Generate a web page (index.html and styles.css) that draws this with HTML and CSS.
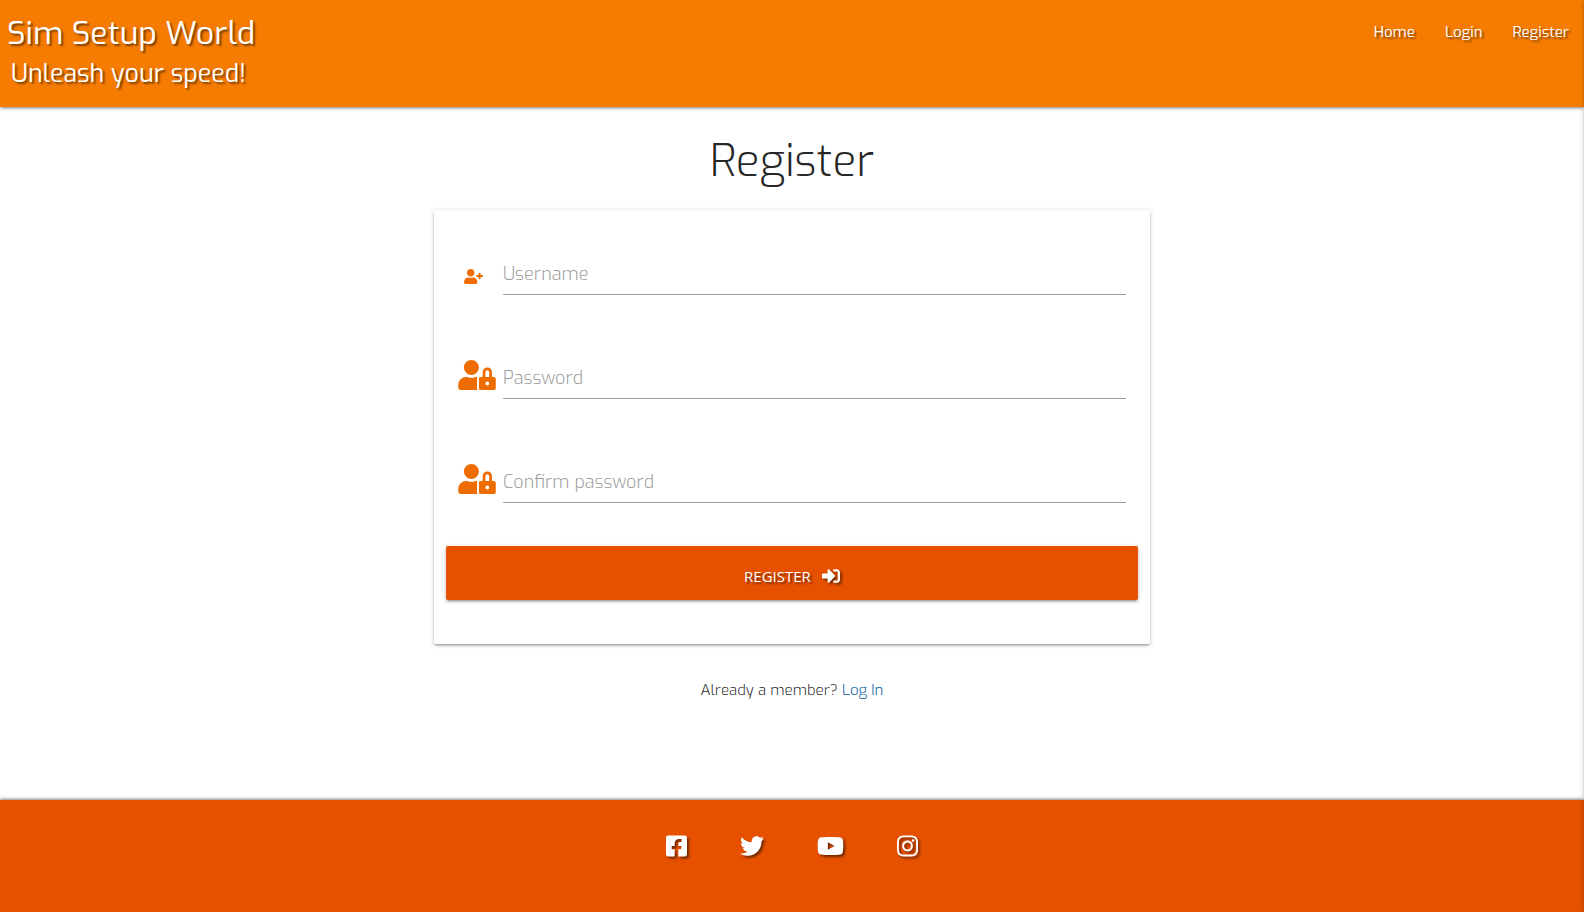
FILE: index.html
```html
<!DOCTYPE html>
<html lang="en">
<head>
<meta charset="utf-8">
<meta name="viewport" content="width=device-width, initial-scale=1">
<title>Sim Setup World</title>
<link rel="stylesheet" href="styles.css">
</head>
<body>
<svg class="sprite" aria-hidden="true">
  <symbol id="user-lock" viewBox="0 0 640 512"><path d="M224 256A128 128 0 1 0 96 128a128 128 0 0 0 128 128zm96 64a63.08 63.08 0 0 1 8.1-30.5c-4.800-.5-9.500-1.500-14.500-1.500h-16.700a174.080 174.080 0 0 1-145.800 0h-16.700A134.430 134.430 0 0 0 0 422.400V464a48 48 0 0 0 48 48h280.900a63.540 63.540 0 0 1-8.900-32zm288-32h-32v-80a80 80 0 0 0-160 0v80h-32a32 32 0 0 0-32 32v160a32 32 0 0 0 32 32h224a32 32 0 0 0 32-32V320a32 32 0 0 0-32-32zM496 432a32 32 0 1 1 32-32 32 32 0 0 1-32 32zm32-144h-64v-80a32 32 0 0 1 64 0z"/></symbol>
</svg>
<header class="header">
  <div class="brand">
    <a class="logo" href="#">Sim Setup World</a>
    <p class="tagline">Unleash your speed!</p>
  </div>
  <nav class="nav" aria-label="Main">
    <a href="#">Home</a>
    <a href="#">Login</a>
    <a href="#">Register</a>
  </nav>
</header>
<main class="main">
  <h1 class="title">Register</h1>
  <form class="card">
    <div class="row">
      <span class="icon-box"><svg class="icon-small" viewBox="0 0 640 512" aria-hidden="true"><path d="M624 208h-64v-64c0-8.800-7.200-16-16-16h-32c-8.800 0-16 7.200-16 16v64h-64c-8.800 0-16 7.200-16 16v32c0 8.800 7.200 16 16 16h64v64c0 8.800 7.200 16 16 16h32c8.800 0 16-7.200 16-16v-64h64c8.800 0 16-7.200 16-16v-32c0-8.800-7.200-16-16-16zm-400 48c70.700 0 128-57.300 128-128S294.700 0 224 0 96 57.300 96 128s57.300 128 128 128zm89.600 32h-16.700c-22.200 10.200-46.900 16-72.900 16s-50.600-5.800-72.900-16h-16.700C60.200 288 0 348.200 0 422.400V464c0 26.500 21.500 48 48 48h352c26.500 0 48-21.500 48-48v-41.600c0-74.200-60.200-134.400-134.400-134.400z"/></svg></span>
      <label class="label" for="username">Username</label>
      <input class="input" id="username" type="text" autocomplete="username">
    </div>
    <div class="row">
      <span class="icon-box"><svg class="icon-large" aria-hidden="true"><use href="#user-lock"/></svg></span>
      <label class="label" for="password">Password</label>
      <input class="input" id="password" type="password">
    </div>
    <div class="row">
      <span class="icon-box"><svg class="icon-large" aria-hidden="true"><use href="#user-lock"/></svg></span>
      <label class="label" for="confirm">Confirm password</label>
      <input class="input" id="confirm" type="password">
    </div>
    <button class="button" type="submit">Register
      <svg class="button-icon" viewBox="0 0 512 512" aria-hidden="true"><path d="M416 448h-84c-6.600 0-12-5.400-12-12v-40c0-6.600 5.400-12 12-12h84c17.700 0 32-14.300 32-32V160c0-17.700-14.300-32-32-32h-84c-6.600 0-12-5.400-12-12V76c0-6.600 5.400-12 12-12h84c53 0 96 43 96 96v192c0 53-43 96-96 96zm-47-209L201 71c-15-15-41-4.500-41 17v96H24c-13.300 0-24 10.700-24 24v96c0 13.300 10.700 24 24 24h136v96c0 21.500 26 32 41 17l168-168c9.300-9.400 9.300-24.600 0-34z"/></svg>
    </button>
  </form>
  <p class="member">Already a member? <a href="#">Log In</a></p>
</main>
<footer class="footer">
  <a href="#" aria-label="Facebook"><svg class="social" viewBox="0 0 448 512"><path d="M400 32H48A48 48 0 0 0 0 80v352a48 48 0 0 0 48 48h137.250V327.690h-63V256h63v-54.640c0-62.150 37-96.480 93.670-96.480 27.140 0 55.520 4.840 55.520 4.840v61h-31.270c-30.810 0-40.420 19.120-40.420 38.730V256h68.780l-11 71.690h-57.780V480H400a48 48 0 0 0 48-48V80a48 48 0 0 0-48-48z"/></svg></a>
  <a href="#" aria-label="Twitter"><svg class="social" viewBox="0 0 512 512"><path d="M459.370 151.716c.325 4.548.325 9.097.325 13.645 0 138.720-105.583 298.558-298.558 298.558-59.452 0-114.680-17.219-161.137-47.106 8.447.974 16.568 1.299 25.340 1.299 49.055 0 94.213-16.568 130.274-44.832-46.132-.975-84.792-31.188-98.112-72.772 6.498.974 12.995 1.624 19.818 1.624 9.421 0 18.843-1.300 27.614-3.573-48.081-9.747-84.143-51.980-84.143-102.985v-1.299c13.969 7.797 30.214 12.670 47.431 13.319-28.264-18.843-46.781-51.005-46.781-87.391 0-19.492 5.197-37.360 14.294-52.954 51.655 63.675 129.300 105.258 216.365 109.807-1.624-7.797-2.599-15.918-2.599-24.040 0-57.828 46.782-104.934 104.934-104.934 30.213 0 57.502 12.670 76.670 33.137 23.715-4.548 46.456-13.320 66.599-25.340-7.798 24.366-24.366 44.833-46.132 57.827 21.117-2.273 41.584-8.122 60.426-16.243-14.292 20.791-32.161 39.308-52.628 54.253z"/></svg></a>
  <a href="#" aria-label="YouTube"><svg class="social" viewBox="0 0 576 512"><path d="M549.655 124.083c-6.281-23.650-24.787-42.276-48.284-48.597C458.781 64 288 64 288 64S117.220 64 74.629 75.486c-23.497 6.322-42.003 24.947-48.284 48.597-11.412 42.867-11.412 132.305-11.412 132.305s0 89.438 11.412 132.305c6.281 23.650 24.787 41.500 48.284 47.821C117.220 448 288 448 288 448s170.780 0 213.371-11.486c23.497-6.321 42.003-24.171 48.284-47.821 11.412-42.867 11.412-132.305 11.412-132.305s0-89.438-11.412-132.305zm-317.510 213.508V175.185l142.739 81.205-142.739 81.201z"/></svg></a>
  <a href="#" aria-label="Instagram"><svg class="social" viewBox="0 0 448 512"><path d="M224.100 141c-63.600 0-114.900 51.300-114.900 114.900s51.300 114.900 114.900 114.900S339 319.500 339 255.900 287.700 141 224.100 141zm0 189.600c-41.100 0-74.700-33.500-74.700-74.700s33.500-74.700 74.700-74.700 74.700 33.500 74.700 74.700-33.600 74.700-74.700 74.700zm146.400-194.300c0 14.900-12 26.800-26.800 26.800-14.900 0-26.800-12-26.800-26.800s12-26.800 26.800-26.800 26.800 12 26.800 26.800zm76.100 27.200c-1.700-35.900-9.900-67.700-36.200-93.900-26.200-26.200-58-34.400-93.900-36.200-37-2.100-147.900-2.100-184.900 0-35.800 1.700-67.600 9.900-93.900 36.100s-34.400 58-36.200 93.900c-2.100 37-2.100 147.900 0 184.900 1.700 35.900 9.900 67.700 36.200 93.900s58 34.400 93.900 36.200c37 2.100 147.900 2.100 184.900 0 35.900-1.700 67.700-9.900 93.900-36.200 26.200-26.200 34.400-58 36.200-93.900 2.100-37 2.100-147.800 0-184.800zM398.800 388c-7.800 19.600-22.900 34.700-42.600 42.600-29.500 11.700-99.500 9-132.100 9s-102.700 2.600-132.100-9c-19.600-7.800-34.700-22.900-42.600-42.600-11.700-29.500-9-99.500-9-132.100s-2.600-102.700 9-132.100c7.800-19.600 22.900-34.700 42.600-42.600 29.500-11.700 99.500-9 132.100-9s102.700-2.600 132.100 9c19.600 7.800 34.700 22.900 42.600 42.600 11.700 29.500 9 99.500 9 132.100s2.700 102.700-9 132.100z"/></svg></a>
</footer>
</body>
</html>
```
FILE: styles.css
```css
:root {
  --shadow: 0 2px 2px 0 rgba(0, 0, 0, .14), 0 3px 1px -2px rgba(0, 0, 0, .12), 0 1px 5px 0 rgba(0, 0, 0, .2);
  --text-shadow: 2px 2px 2px rgba(0, 0, 0, .5);
}

* { box-sizing: border-box; }

body {
  display: flex;
  flex-direction: column;
  min-height: 100vh;
  margin: 0;
  background: #fff;
  color: rgba(0, 0, 0, .87);
  font-family: Exo, "Exo 2", Roboto, sans-serif;
  font-size: 15px;
  line-height: 24px;
}

/* Edge shadow of the closed side drawer */
body::after {
  content: "";
  position: fixed;
  top: 0;
  bottom: 0;
  left: 100%;
  width: 20px;
  box-shadow: var(--shadow);
}

a { text-decoration: none; }
p { margin: 0; }
svg { display: block; fill: currentColor; }
.sprite { position: absolute; width: 0; height: 0; }

.header {
  display: flex;
  justify-content: space-between;
  align-items: flex-start;
  padding: 12px 15px 13px 7px;
  background: #f57c00;
  color: #fff;
  box-shadow: var(--shadow);
  text-shadow: var(--text-shadow);
}

.brand {
  display: flex;
  flex-direction: column;
  align-items: flex-start;
}

.logo {
  color: inherit;
  font-size: 32px;
  line-height: 42px;
}

.tagline {
  padding: 0 4px;
  font-size: 25px;
  line-height: 40px;
}

.nav {
  display: flex;
  gap: 30px;
  padding-top: 8px;
}

.nav a { color: inherit; }

.main {
  display: flex;
  flex: 1;
  flex-direction: column;
  align-items: center;
  padding: 29px 24px;
}

.title {
  margin: 0 0 24px;
  font-size: 44px;
  font-weight: 300;
  line-height: 50px;
}

.card {
  width: 100%;
  max-width: 716px;
  padding: 40px 12px 44px;
  border-radius: 2px;
  background: #fff;
  box-shadow: var(--shadow);
}

.row {
  display: grid;
  grid-template-columns: 45px 1fr;
  margin: 0 12px 59px;
}

.row:nth-of-type(3) { margin-bottom: 43px; }

.icon-box {
  display: grid;
  place-items: center start;
  height: 45px;
  color: #ef6c00;
}

.icon-small {
  width: 19px;
  height: 15px;
  margin: 7px 0 0 6px;
}

.icon-large {
  width: 38px;
  height: 30px;
  margin-bottom: 4px;
}

.label,
.input {
  grid-column: 2;
  grid-row: 1;
}

.label {
  z-index: 1;
  align-self: center;
  padding-top: 2px;
  color: #9e9e9e;
  font-size: 18px;
  font-weight: 300;
  pointer-events: none;
}

.input {
  width: 100%;
  height: 45px;
  padding: 0;
  border: 0;
  border-bottom: 1px solid #9e9e9e;
  outline: 0;
  background: transparent;
  font: inherit;
}

.input:focus { border-color: #ef6c00; }

.button {
  display: flex;
  justify-content: center;
  align-items: center;
  gap: 11px;
  width: 100%;
  height: 54px;
  padding: 5px 0 0;
  border: 0;
  border-radius: 2px;
  background: #e65100;
  color: #fff;
  box-shadow: var(--shadow);
  font-family: "Open Sans", sans-serif;
  font-size: 15px;
  text-shadow: var(--text-shadow);
  text-transform: uppercase;
}

.button-icon {
  width: 18px;
  height: 18px;
  filter: drop-shadow(2px 2px 1px rgba(0, 0, 0, .5));
}

.member {
  margin-top: 34px;
  font-weight: 300;
}

.member a { color: #01579b; }

.footer {
  display: flex;
  justify-content: center;
  gap: 53px;
  padding: 34px 0 54px;
  background: #e65100;
  color: #fff;
  box-shadow: 0 -1px 3px rgba(0, 0, 0, .5);
}

.footer a { color: inherit; }

.social {
  width: auto;
  height: 24px;
  filter: drop-shadow(2px 2px 1px rgba(0, 0, 0, .5));
}
```
